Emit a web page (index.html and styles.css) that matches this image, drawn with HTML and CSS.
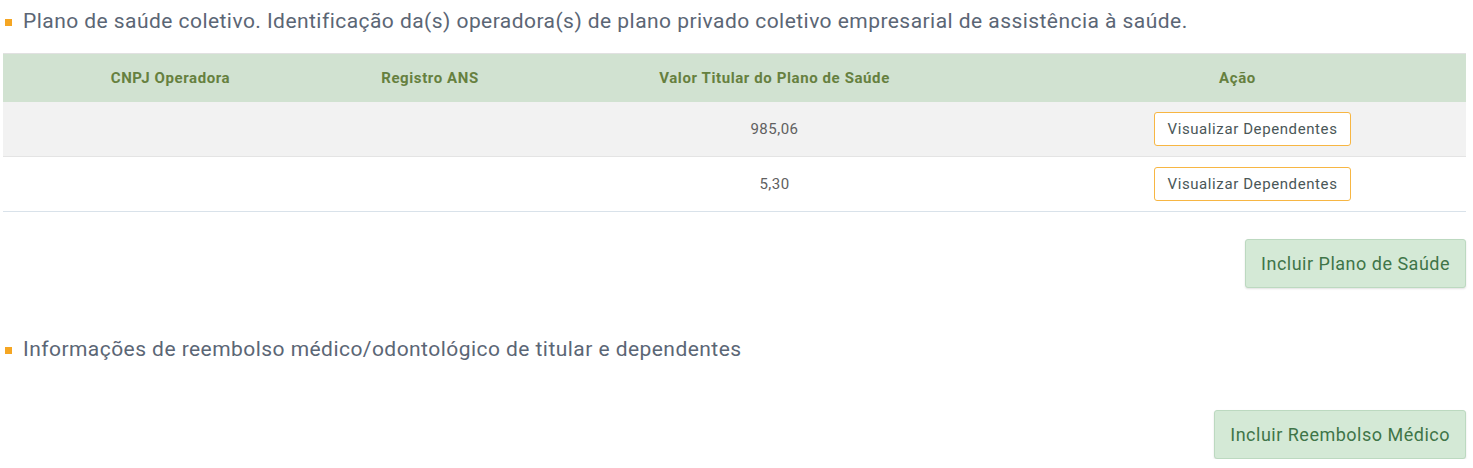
FILE: index.html
```html
<!DOCTYPE html>
<html lang="pt-BR">
<head>
<meta charset="utf-8">
<title>Plano de saúde</title>
<link rel="stylesheet" href="styles.css">
</head>
<body>
<section class="section">
  <h2 class="section-title">Plano de saúde coletivo. Identificação da(s) operadora(s) de plano privado coletivo empresarial de assistência à saúde.</h2>
  <table class="grid">
    <colgroup>
      <col class="c1"><col class="c2"><col class="c3"><col class="c4">
    </colgroup>
    <thead>
      <tr>
        <th>CNPJ Operadora</th>
        <th>Registro ANS</th>
        <th>Valor Titular do Plano de Saúde</th>
        <th class="action-head">Ação</th>
      </tr>
    </thead>
    <tbody>
      <tr class="odd">
        <td></td>
        <td></td>
        <td>985,06</td>
        <td class="action"><button class="btn-outline">Visualizar Dependentes</button></td>
      </tr>
      <tr>
        <td></td>
        <td></td>
        <td>5,30</td>
        <td class="action"><button class="btn-outline">Visualizar Dependentes</button></td>
      </tr>
    </tbody>
  </table>
  <div class="actions">
    <button class="btn-green">Incluir Plano de Saúde</button>
  </div>
</section>
<section class="section second">
  <h2 class="section-title">Informações de reembolso médico/odontológico de titular e dependentes</h2>
  <div class="actions tall">
    <button class="btn-green">Incluir Reembolso Médico</button>
  </div>
</section>
</body>
</html>
```
FILE: styles.css
```css
* { box-sizing: border-box; }

body {
  margin: 0;
  padding: 0 7px 0 3px;
  font-family: Roboto, "Liberation Sans", Arial, sans-serif;
  background: #fff;
  color: #555;
}

.section-title {
  display: flex;
  align-items: center;
  margin: 0;
  padding: 9px 0 0 2px;
  font-size: 21px;
  font-weight: 400;
  letter-spacing: 0.45px;
  line-height: 24px;
  color: #5b6675;
}

.section-title::before {
  content: "";
  width: 7px;
  height: 7px;
  margin-right: 11px;
  margin-top: 2px;
  background: #f5a623;
  flex: none;
}

.grid {
  width: 100%;
  margin-top: 20px;
  border-collapse: collapse;
  font-size: 15px;
  letter-spacing: 0.5px;
}

.c1 { width: 335px; }
.c2 { width: 184px; }
.c3 { width: 505px; }

.grid thead tr {
  background: #d1e2d1;
  border-top: 1px solid #e1e1e1;
}

.grid th {
  height: 48px;
  font-weight: 700;
  letter-spacing: 0.6px;
  color: #66803f;
  text-align: center;
  padding: 0 8px;
}

.grid th.action-head { padding-right: 26px; }

.grid td {
  height: 55px;
  text-align: center;
  color: #606060;
  padding: 0 8px;
}

.grid tbody tr { border-bottom: 1px solid #e4e4e4; }
.grid tbody tr:last-child { border-bottom-color: #d9e2ea; }
.grid tr.odd { background: #f2f2f2; }

.grid td.action { padding-left: 20px; }

.btn-outline {
  font-family: inherit;
  font-size: 15px;
  letter-spacing: 0.6px;
  color: #4a5758;
  background: #fff;
  border: 1px solid #f7b643;
  border-radius: 3px;
  height: 34px;
  padding: 0 12px;
  cursor: pointer;
}

.actions {
  display: flex;
  justify-content: flex-end;
  padding-top: 27px;
}

.btn-green {
  font-family: inherit;
  font-size: 18px;
  letter-spacing: 0.5px;
  color: #3f7548;
  background: #d4e9d6;
  border: 1px solid #bcd9c0;
  border-radius: 3px;
  height: 49px;
  padding: 0 15px;
  box-shadow: 0 1px 2px rgba(0, 0, 0, 0.12);
  cursor: pointer;
}

.second { padding-top: 49px; }
.second .section-title { padding-top: 0; }
.actions.tall { padding-top: 49px; }
```
